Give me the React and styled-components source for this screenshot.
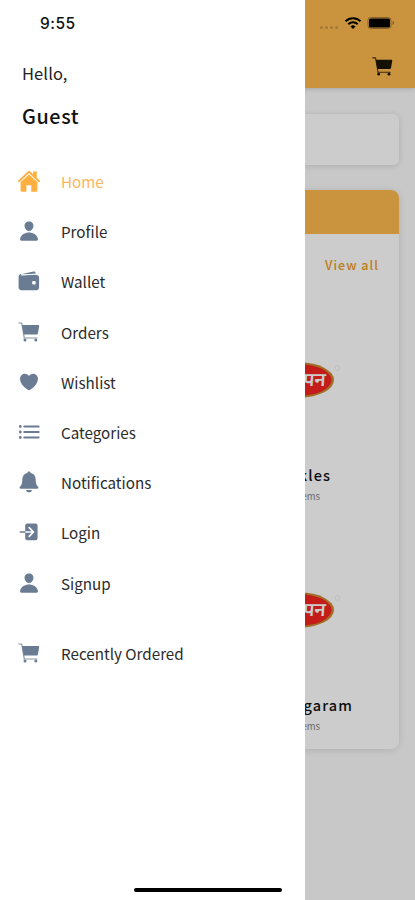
import React, { useState } from 'react'
import styled, { createGlobalStyle } from 'styled-components'
import { IoPerson, IoHeart } from 'react-icons/io5'


const GlobalStyle = createGlobalStyle`
    * {
        box-sizing: border-box;
    }
    body {
        margin: 0;
        background-color: #fff;
        font-family: "Noto Sans CJK SC", "Noto Sans", sans-serif;
    }
`
const Screen = styled.div`
    position: relative;
    width: 415px;
    height: 900px;
    overflow: hidden;
    background-color: #fbfbfb;
`
const Header = styled.div`
    height: 88px;
    background-color: #fdb94e;
    box-shadow: 0 1px 5px rgba(0,0,0,0.18);
    display: flex;
    flex-direction: column;
    align-items: flex-end;
    padding: 15px 20px 0 0;
`
const StatusIcons = styled.div`
    display: flex;
    align-items: center;
    height: 16px;
`
const Signal = styled.div`
    display: flex;
    gap: 2px;
    margin: 9px 6px 0 0;
`
const SignalDot = styled.div`
    width: 3px;
    height: 3px;
    border-radius: 50%;
    background-color: #cf9745;
`
const CartBtn = styled.div`
    color: #1c1505;
    margin: 25px 2px 0 0;
    line-height: 0;
`
const Content = styled.div`
    padding: 26px 16px 0;
`
const SearchBox = styled.div`
    height: 51px;
    border-radius: 6px;
    background-color: #fff;
    box-shadow: 0 1px 7px rgba(0,0,0,0.14);
`
const Card = styled.div`
    height: 559px;
    margin-top: 25px;
    border-radius: 8px;
    background-color: #fff;
    box-shadow: 0 1px 9px rgba(0,0,0,0.13);
    overflow: hidden;
`
const CardHead = styled.div`
    height: 44px;
    background-color: #fdb94e;
`
const ViewAll = styled.div`
    height: 64px;
    padding: 0 20px 0 0;
    line-height: 62px;
    text-align: right;
    font-size: 12.5px;
    font-weight: 500;
    letter-spacing: 1px;
    color: #ef9d1c;
`
const Product = styled.div`
    height: 230px;
    padding-top: 64px;
    display: flex;
    flex-direction: column;
    align-items: flex-end;
`
const ProductName = styled.div`
    margin: 66px ${props => props.$end}px 0 0;
    line-height: 22px;
    font-size: 14.5px;
    font-weight: 500;
    letter-spacing: 1.1px;
    color: #111;
`
const ProductCount = styled.div`
    margin: 2px 79px 0 0;
    line-height: 16px;
    font-size: 9.5px;
    color: #888;
`
const Logo = styled.svg`
    margin-right: 56px;
`
const Overlay = styled.div`
    position: absolute;
    inset: 0;
    background-color: rgba(0,0,0,0.2);
`
const Drawer = styled.div`
    position: absolute;
    top: 0;
    left: 0;
    width: 305px;
    height: 900px;
    background-color: #fff;
    color: #222;
`
const Time = styled.div`
    padding: 14px 0 0 40px;
    height: 61px;
    line-height: 20px;
    font-family: Inter, sans-serif;
    font-size: 15.5px;
    font-weight: 500;
    letter-spacing: 0.5px;
    color: #111;
`
const Hello = styled.div`
    padding-left: 22px;
    height: 40px;
    line-height: 25px;
    font-size: 16.5px;
    letter-spacing: 0.1px;
`
const UserName = styled.div`
    padding-left: 22px;
    height: 55px;
    line-height: 30px;
    font-size: 19.8px;
    font-weight: 500;
    letter-spacing: 0.6px;
    color: #111;
`
const MenuItem = styled.div`
    display: flex;
    align-items: center;
    height: 50.2px;
    margin-top: ${props => (props.$spaced ? '20px' : '0')};
    padding-left: 18px;
    gap: 21px;
    font-size: 15.2px;
    cursor: pointer;
    color: ${props => (props.$active ? '#fdb55a' : '#2b2b2b')};

    svg {
        flex: none;
        color: ${props => (props.$active ? '#fdb040' : '#6a7b94')};
    }
`
const HomeBar = styled.div`
    position: absolute;
    left: 134px;
    bottom: 8px;
    width: 148px;
    height: 4px;
    border-radius: 2px;
    background-color: #000;
`

const Icon = ({ size = 22, children }) => (
    <svg width={size} height={size} viewBox="0 0 22 22" fill="currentColor">{children}</svg>
)

const HomeIcon = () => (
    <Icon>
        <path d="M11 4.6 2.6 12v8.600c0 .7.4 1.100 1.100 1.100h4.700v-6.400h4.900v6.400h5c.7 0 1.100-.4 1.100-1.100V12z" />
        <path d="M15 1.600h3.800v7L15 5.200z" />
        <path d="M1.600 12.400 11 3.800l9.400 8.600" fill="none" stroke="#fff" strokeWidth=".7" />
        <path d="M1 11.200 11 1.700l10 9.500" fill="none" stroke="currentColor" strokeWidth="1.900" strokeLinecap="round" strokeLinejoin="round" />
    </Icon>
)
const WalletIcon = () => (
    <Icon>
        <path d="M3 4.300 15.600 1.600c1-.2 1.900.4 2 1.500v1.200z" />
        <path d="M3.200 5h15.300c1.500 0 2.600 1.100 2.600 2.600v10c0 1.500-1.100 2.600-2.600 2.600H3.200C1.700 20.200.6 19.100.6 17.600V6.600C.6 5 2 4.200 3.200 4z" />
        <path d="M3.500 5.300 17.600 4" stroke="#fff" strokeWidth=".8" />
        <rect x="14.200" y="11" width="3.500" height="3.400" rx="1" fill="#fff" />
    </Icon>
)
const CartIcon = ({ size }) => (
    <Icon size={size}>
        <path d="M.8 2h2.900L6.300 17M6 17h13" fill="none" stroke="currentColor" strokeWidth="1.200" strokeOpacity=".8" strokeLinecap="round" strokeLinejoin="round" />
        <path d="M4 4h16.500c.5 0 .8.400.7.900l-1.300 7.700c-.1.700-.5 1-1.200 1H5.700z" />
        <circle cx="7" cy="19" r="1.500" />
        <circle cx="17.800" cy="19" r="1.500" />
    </Icon>
)
const ListIcon = () => (
    <Icon>
        <path d="M6.200 5.500h14.500M6.200 11h14.500M6.200 16.500h14.500" stroke="currentColor" strokeWidth="1.900" strokeLinecap="round" />
        <circle cx="2.300" cy="5.500" r="1.400" />
        <circle cx="2.300" cy="11" r="1.400" />
        <circle cx="2.300" cy="16.500" r="1.400" />
    </Icon>
)
const BellIcon = () => (
    <Icon>
        <path d="M11 .4c.9 0 1.400.5 1.500 1.400 3.300.8 5 3.200 5.200 6.600.1 3.700.5 5.500 2.300 7.200.8.800.4 2.200-.9 2.200H2.900c-1.300 0-1.700-1.400-.9-2.200 1.800-1.700 2.200-3.500 2.300-7.200.2-3.400 1.900-5.800 5.200-6.600C9.600.9 10.100.4 11 .4z" />
        <path d="M8 18.900h6c-.3 1.500-1.400 2.400-3 2.400s-2.700-.9-3-2.400z" />
    </Icon>
)
const LoginIcon = () => (
    <Icon>
        <rect x="7.200" y="2.500" width="12.400" height="16.800" rx="2.200" />
        <path d="M7 11h8M11.200 6.700l4.300 4.300-4.300 4.300" fill="none" stroke="#fff" strokeWidth="1.700" strokeLinecap="round" strokeLinejoin="round" />
        <path d="M2.300 11h4.600" stroke="currentColor" strokeWidth="1.500" strokeLinecap="round" />
    </Icon>
)

const BrandLogo = () => (
    <Logo width="76" height="36" viewBox="0 0 76 36">
        <ellipse cx="33" cy="18" rx="34" ry="17.500" fill="#c98a32" />
        <ellipse cx="32" cy="18" rx="32.500" ry="15.800" fill="#f52420" />
        <text x="58" y="24" textAnchor="end" fontSize="19" fontWeight="600" fontFamily="Noto Sans, sans-serif" fill="#fff" transform="translate(2 0) skewX(-4)">पन</text>
        <circle cx="70.500" cy="6" r="2.200" fill="none" stroke="#f0f0f0" />
    </Logo>
)

const menu = [
    { name: 'Home', icon: <HomeIcon /> },
    { name: 'Profile', icon: <IoPerson size={22} /> },
    { name: 'Wallet', icon: <WalletIcon /> },
    { name: 'Orders', icon: <CartIcon /> },
    { name: 'Wishlist', icon: <IoHeart size={22} /> },
    { name: 'Categories', icon: <ListIcon /> },
    { name: 'Notifications', icon: <BellIcon /> },
    { name: 'Login', icon: <LoginIcon /> },
    { name: 'Signup', icon: <IoPerson size={22} /> },
    { name: 'Recently Ordered', icon: <CartIcon />, spaced: true },
]

const products = [
    { name: 'Pickles', end: 68 },
    { name: 'Ingaram', end: 46 },
]


function App() {
    const [page, setPage] = useState('Home')

    return (
        <>
            <GlobalStyle />
            <Screen>
                <Header>
                    <StatusIcons>
                        <Signal>
                            <SignalDot /><SignalDot /><SignalDot /><SignalDot />
                        </Signal>
                        <svg width="18" height="14" viewBox="0 0 18 14" fill="none" stroke="#000" strokeWidth="2">
                            <path d="M1.500 5.300a10.500 10.500 0 0 1 15 0M4.300 8.200a6.600 6.600 0 0 1 9.400 0" />
                            <path d="M9 13 6.500 10.500a3.600 3.600 0 0 1 5 0z" fill="#000" stroke="none" />
                        </svg>
                        <svg width="33" height="14" viewBox="-5 0 33 14">
                            <rect x="1" y="1.500" width="23" height="11" rx="2.500" fill="none" stroke="#a87a36" />
                            <rect x="2" y="2.500" width="21" height="9" rx="1.500" fill="#000" />
                            <path d="M25.500 5v4c1-.3 1.500-1 1.500-2s-.5-1.700-1.500-2z" fill="#a87a36" />
                        </svg>
                    </StatusIcons>
                    <CartBtn><CartIcon size={21} /></CartBtn>
                </Header>
                <Content>
                    <SearchBox />
                    <Card>
                        <CardHead />
                        <ViewAll>View all</ViewAll>
                        {products.map(p => (
                            <Product key={p.name}>
                                <BrandLogo />
                                <ProductName $end={p.end}>{p.name}</ProductName>
                                <ProductCount>Items</ProductCount>
                            </Product>
                        ))}
                    </Card>
                </Content>
                <Overlay />
                <Drawer>
                    <Time>9:55</Time>
                    <Hello>Hello,</Hello>
                    <UserName>Guest</UserName>
                    {menu.map(item => (
                        <MenuItem
                            key={item.name}
                            $active={page === item.name}
                            $spaced={item.spaced}
                            onClick={() => setPage(item.name)}
                        >
                            {item.icon}
                            {item.name}
                        </MenuItem>
                    ))}
                </Drawer>
                <HomeBar />
            </Screen>
        </>
    )
}

export default App
